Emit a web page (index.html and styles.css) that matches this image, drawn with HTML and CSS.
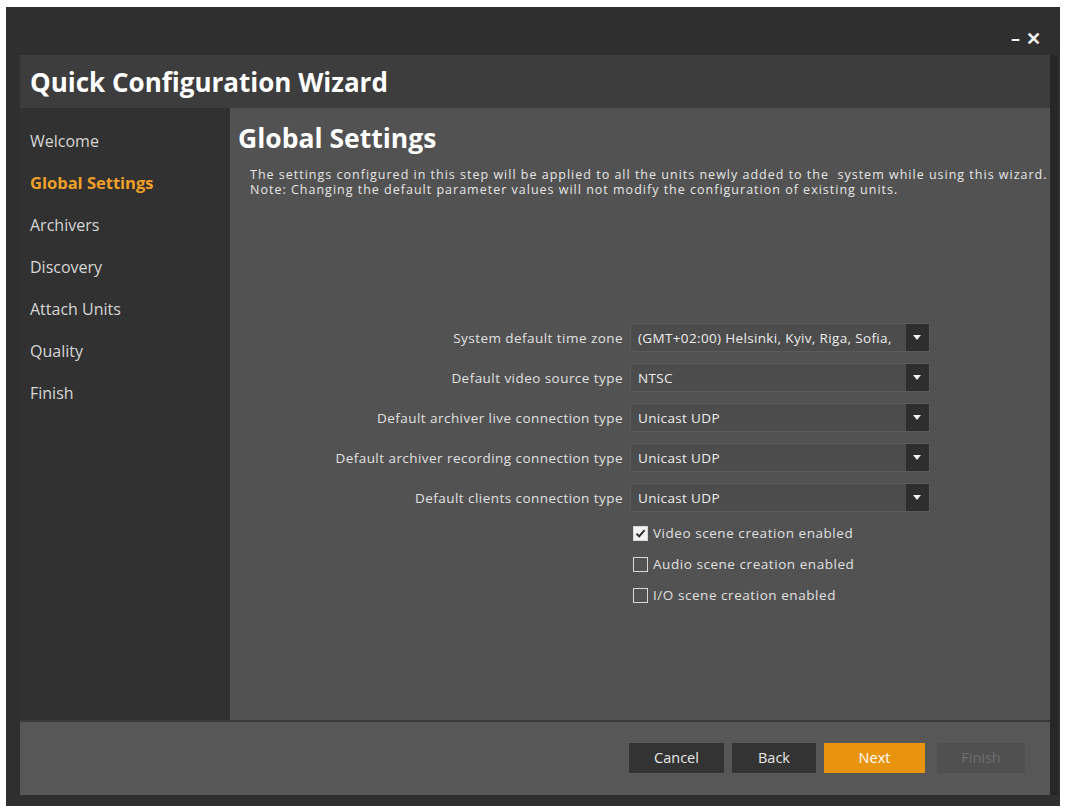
FILE: index.html
```html
<!DOCTYPE html>
<html lang="en">
<head>
    <meta charset="UTF-8">
    <title>Quick Configuration Wizard</title>
    <link rel="stylesheet" href="styles.css">
</head>
<body>
    <div class="window">
        <div class="titlebar">
            <span class="win-btn">&#8211;</span>
            <span class="win-btn">&#10005;</span>
        </div>

        <div class="frame">
            <div class="wizard">
                <div class="header">Quick Configuration Wizard</div>

                <div class="body">
                    <ul class="steps">
                        <li>Welcome</li>
                        <li class="active">Global Settings</li>
                        <li>Archivers</li>
                        <li>Discovery</li>
                        <li>Attach Units</li>
                        <li>Quality</li>
                        <li>Finish</li>
                    </ul>

                    <div class="content">
                        <h2 class="page-title">Global Settings</h2>
                        <p class="intro">
                            The settings configured in this step will be applied to all the units newly added to the&nbsp; system while using this wizard.<br>
                            Note: Changing the default parameter values will not modify the configuration of existing units.
                        </p>

                        <div class="form">
                            <label>System default time zone</label>
                            <div class="combo"><span>(GMT+02:00) Helsinki, Kyiv, Riga, Sofia,</span><i class="arrow"></i></div>

                            <label>Default video source type</label>
                            <div class="combo"><span>NTSC</span><i class="arrow"></i></div>

                            <label>Default archiver live connection type</label>
                            <div class="combo"><span>Unicast UDP</span><i class="arrow"></i></div>

                            <label>Default archiver recording connection type</label>
                            <div class="combo"><span>Unicast UDP</span><i class="arrow"></i></div>

                            <label>Default clients connection type</label>
                            <div class="combo"><span>Unicast UDP</span><i class="arrow"></i></div>
                        </div>

                        <div class="checks">
                            <div class="check">
                                <span class="box checked">
                                    <svg width="11" height="11" viewBox="0 0 11 11"><path d="M1.5 5.8 L4.2 8.4 L9.6 2.2" fill="none" stroke="#2e2e2e" stroke-width="2"/></svg>
                                </span>
                                Video scene creation enabled
                            </div>
                            <div class="check"><span class="box"></span>Audio scene creation enabled</div>
                            <div class="check"><span class="box"></span>I/O scene creation enabled</div>
                        </div>
                    </div>
                </div>

                <div class="footer">
                    <button class="btn">Cancel</button>
                    <button class="btn back">Back</button>
                    <button class="btn primary">Next</button>
                    <button class="btn disabled">Finish</button>
                </div>
            </div>
            <div class="scroll"></div>
        </div>
    </div>
</body>
</html>
```

FILE: styles.css
```css
* {
    box-sizing: border-box;
}

body {
    margin: 0;
    background: #ffffff;
    font-family: 'Open Sans', 'Noto Sans', sans-serif;
    color: #e2e2e2;
}

.window {
    margin: 7px 0 0 6px;
    width: 1054px;
    height: 799px;
    background: #2f2f2f;
    display: flex;
    flex-direction: column;
}

.titlebar {
    height: 48px;
    display: flex;
    justify-content: flex-end;
    align-items: center;
    padding: 14px 19px 0 0;
    gap: 6px;
}

.win-btn {
    color: #f2f2f2;
    font-size: 18px;
    font-weight: 700;
}

.frame {
    display: flex;
    padding-left: 14px;
}

.wizard {
    width: 1030px;
    display: flex;
    flex-direction: column;
}

.scroll {
    width: 8px;
    background: #272727;
}

.header {
    height: 53px;
    background: #3d3d3d;
    color: #ffffff;
    font-size: 26px;
    font-weight: 700;
    padding: 9px 0 0 10px;
}

.body {
    display: flex;
    height: 612px;
}

.steps {
    list-style: none;
    margin: 0;
    padding: 12px 0 0 10px;
    width: 210px;
    background: #313131;
}

.steps li {
    height: 42px;
    line-height: 42px;
    font-size: 16px;
    color: #d6d6d6;
}

.steps li.active {
    color: #f0a028;
    font-weight: 700;
    font-size: 16.5px;
}

.content {
    flex: 1;
    background: #525252;
    padding-top: 13px;
}

.page-title {
    margin: 0 0 0 8px;
    font-size: 26.5px;
    line-height: 34px;
    color: #ffffff;
}

.intro {
    margin: 12px 0 0 20px;
    font-size: 12.5px;
    line-height: 15px;
    letter-spacing: 1px;
    white-space: nowrap;
    color: #e6e6e6;
}

.form {
    display: grid;
    grid-template-columns: 393px 300px;
    column-gap: 7px;
    row-gap: 11px;
    align-items: center;
    margin-top: 126px;
}

.form label {
    text-align: right;
    font-size: 13.5px;
    letter-spacing: 0.45px;
    color: #e0e0e0;
}

.combo {
    height: 29px;
    display: flex;
    align-items: center;
    justify-content: space-between;
    background: #4c4c4c;
    border: 1px solid #5a5a5a;
    padding-left: 7px;
    font-size: 13.5px;
    letter-spacing: 0.35px;
    color: #ececec;
}

.arrow {
    width: 23px;
    height: 27px;
    background: #2e2e2e;
    position: relative;
}

.arrow::after {
    content: "";
    position: absolute;
    left: 7px;
    top: 11px;
    border-left: 4.5px solid transparent;
    border-right: 4.5px solid transparent;
    border-top: 5px solid #f2f2f2;
}

.checks {
    margin: 11px 0 0 403px;
    display: flex;
    flex-direction: column;
    gap: 11px;
}

.check {
    display: flex;
    align-items: center;
    gap: 5px;
    font-size: 13.5px;
    letter-spacing: 0.55px;
    color: #e0e0e0;
    height: 20px;
}

.box {
    width: 15px;
    height: 15px;
    border: 1.5px solid #d8d8d8;
    display: flex;
    align-items: center;
    justify-content: center;
}

.box.checked {
    background: #f2f2f2;
}

.footer {
    height: 75px;
    background: #575757;
    border-top: 2px solid #3a3a3a;
    display: flex;
    justify-content: flex-end;
    align-items: center;
    padding: 0 25px 2px 0;
}

.btn {
    height: 30px;
    border: none;
    font-family: inherit;
    font-size: 14.5px;
    color: #e8e8e8;
    background: #333333;
    width: 95px;
    margin-left: 8px;
}

.btn.back {
    width: 84px;
}

.btn.primary {
    background: #e8940e;
    color: #ffffff;
    width: 101px;
}

.btn.disabled {
    background: #505050;
    color: #6e6e6e;
    width: 88px;
    margin-left: 12px;
}
```
